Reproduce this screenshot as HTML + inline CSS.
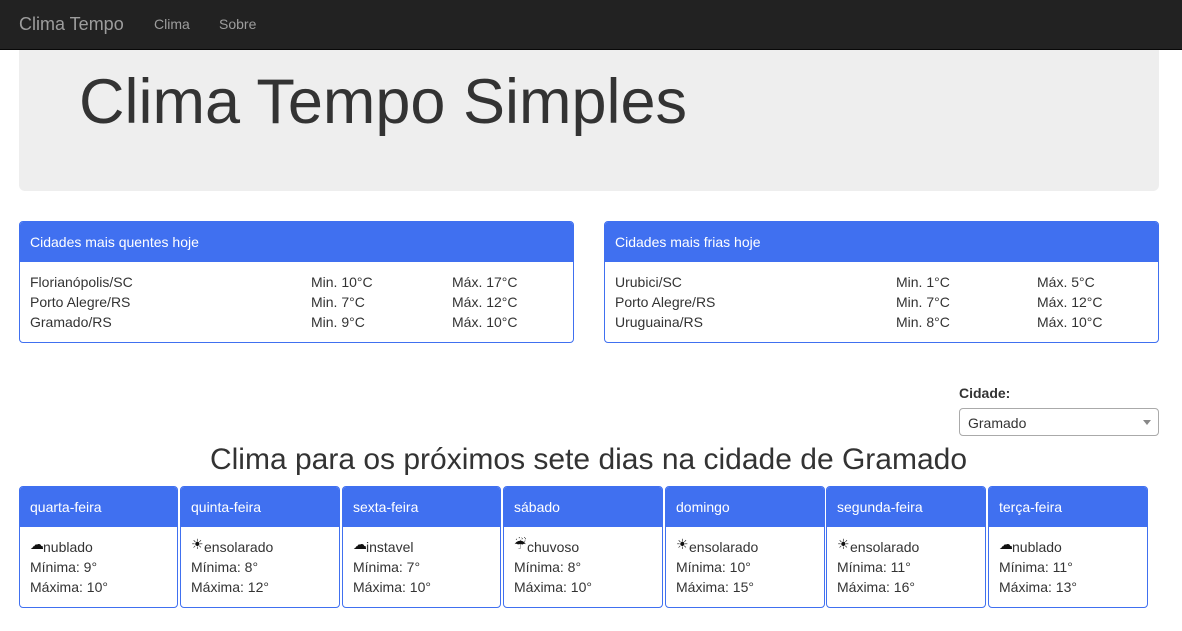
<!DOCTYPE html>
<html><head><meta charset="utf-8"><style>
*{box-sizing:border-box;margin:0;padding:0}
body{width:1182px;height:631px;overflow:hidden;background:#fff;font-family:"Liberation Sans",Arial,sans-serif;font-size:14px;color:#333;position:relative}
.nav{position:absolute;left:0;top:0;width:1182px;height:50px;background:#222;border-bottom:1px solid #080808}
.nav span{position:absolute;color:#9d9d9d;top:16px;font-size:14px}
.nav .brand{left:19px;top:14px;font-size:18px}
.jumbo{position:absolute;left:19px;top:50px;width:1140px;height:141px;background:#eee;border-radius:0 0 6px 6px}
.jumbo h1{position:absolute;left:60px;top:16px;font-size:63px;font-weight:normal;color:#333}
.panel{position:absolute;border:1px solid #4070f0;border-radius:4px;background:#fff;overflow:hidden}
.ph{background:#4070f0;color:#fff;height:40px;padding:12px 10px 0;font-size:14px}
.c{position:absolute;line-height:20px}
.pb{padding:10px 10px;line-height:20px;height:20px}
.pb div{height:20px;line-height:20px}
.ic{display:inline-block;width:13px;height:16px;line-height:16px;vertical-align:-1px;font-family:"DejaVu Sans",sans-serif;font-size:14px;color:#111;overflow:hidden}
h2{position:absolute;left:0;width:1177px;text-align:center;top:443px;font-size:30px;font-weight:normal;color:#333}
label{position:absolute;left:959px;top:385px;font-weight:bold}
.sel{position:absolute;left:959px;top:408px;width:200px;height:28px;border:1px solid #aaa;border-radius:4px;padding:6px 8px;line-height:16px}
.sel:after{content:"";position:absolute;right:7px;top:11px;border:4px solid transparent;border-top:5px solid #888}
</style></head><body>
<div class="nav"><span class="brand">Clima Tempo</span><span style="left:154px">Clima</span><span style="left:219px">Sobre</span></div>
<div class="jumbo"><h1>Clima Tempo Simples</h1></div>

<div class="panel" style="left:19px;top:221px;width:555px;height:122px">
<div class="ph">Cidades mais quentes hoje</div>
<div class="c" style="left:10px;top:50px">Florianópolis/SC<br>Porto Alegre/RS<br>Gramado/RS</div>
<div class="c" style="left:291px;top:50px">Min. 10°C<br>Min. 7°C<br>Min. 9°C</div>
<div class="c" style="left:432px;top:50px">Máx. 17°C<br>Máx. 12°C<br>Máx. 10°C</div>
</div>
<div class="panel" style="left:604px;top:221px;width:555px;height:122px">
<div class="ph">Cidades mais frias hoje</div>
<div class="c" style="left:10px;top:50px">Urubici/SC<br>Porto Alegre/RS<br>Uruguaina/RS</div>
<div class="c" style="left:291px;top:50px">Min. 1°C<br>Min. 7°C<br>Min. 8°C</div>
<div class="c" style="left:432px;top:50px">Máx. 5°C<br>Máx. 12°C<br>Máx. 10°C</div>
</div>

<label>Cidade:</label>
<div class="sel">Gramado</div>
<h2>Clima para os próximos sete dias na cidade de Gramado</h2>

<div class="panel" style="left:19px;top:486px;width:159px;height:122px"><div class="ph">quarta-feira</div><div class="pb"><div><span class="ic">☁</span>nublado</div><div>Mínima: 9°</div><div>Máxima: 10°</div></div></div>
<div class="panel" style="left:180px;top:486px;width:160px;height:122px"><div class="ph">quinta-feira</div><div class="pb"><div><span class="ic">☀</span>ensolarado</div><div>Mínima: 8°</div><div>Máxima: 12°</div></div></div>
<div class="panel" style="left:342px;top:486px;width:159px;height:122px"><div class="ph">sexta-feira</div><div class="pb"><div><span class="ic">☁</span>instavel</div><div>Mínima: 7°</div><div>Máxima: 10°</div></div></div>
<div class="panel" style="left:503px;top:486px;width:160px;height:122px"><div class="ph">sábado</div><div class="pb"><div><span class="ic">☔</span>chuvoso</div><div>Mínima: 8°</div><div>Máxima: 10°</div></div></div>
<div class="panel" style="left:665px;top:486px;width:160px;height:122px"><div class="ph">domingo</div><div class="pb"><div><span class="ic">☀</span>ensolarado</div><div>Mínima: 10°</div><div>Máxima: 15°</div></div></div>
<div class="panel" style="left:826px;top:486px;width:160px;height:122px"><div class="ph">segunda-feira</div><div class="pb"><div><span class="ic">☀</span>ensolarado</div><div>Mínima: 11°</div><div>Máxima: 16°</div></div></div>
<div class="panel" style="left:988px;top:486px;width:160px;height:122px"><div class="ph">terça-feira</div><div class="pb"><div><span class="ic">☁</span>nublado</div><div>Mínima: 11°</div><div>Máxima: 13°</div></div></div>
</body></html>
